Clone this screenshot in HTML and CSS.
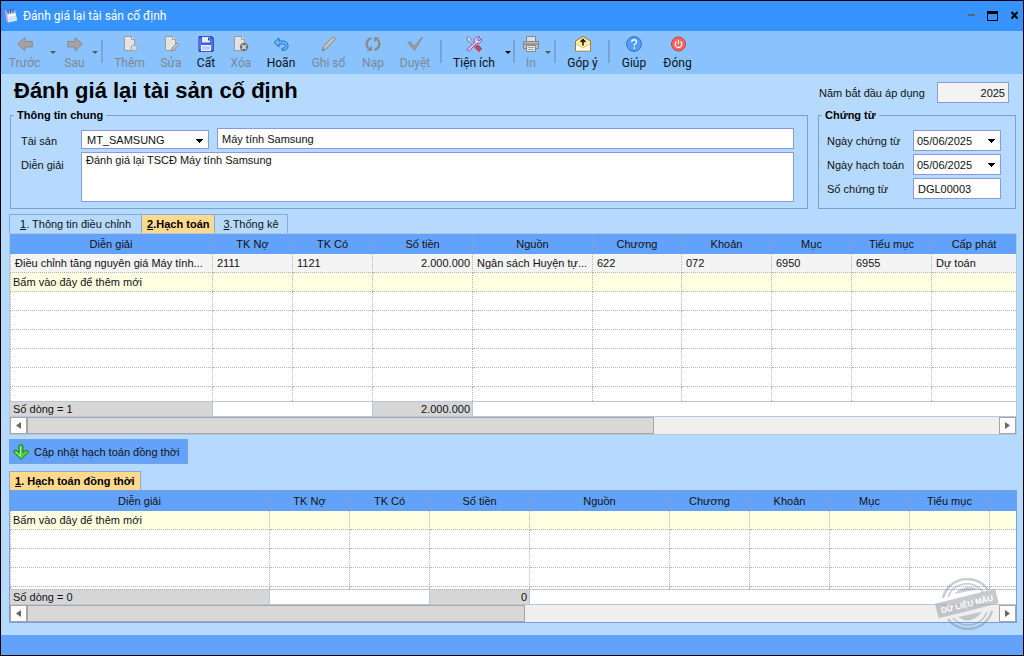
FILE: index.html
```html
<!DOCTYPE html>
<html lang="vi">
<head>
<meta charset="utf-8">
<title>Đánh giá lại tài sản cố định</title>
<link rel="stylesheet" href="styles.css">
</head>
<body>
<div class="window">
  <header class="titlebar">
    <svg class="app-icon" width="14" height="16" viewBox="0 0 14 16"><path d="M.5 3l3-1 1 11-2 1z" fill="#b79be0"/><path d="M3 3.500l8-1.500 2 10.500-9 2z" fill="#fff6dc"/><path d="M3 3.500l8-1.500.6 3-8 1.600z" fill="#7fb2ee"/><path d="M4 9l8-1.500.8 4.500-8.800 2z" fill="#cfe4f7"/><path d="M4 2v3M6.500 1.500v3M9 1v3" stroke="#28456e" stroke-width="1"/></svg>
    <span class="title">Đánh giá lại tài sản cố định</span>
    <div class="window-buttons">
      <button class="wbtn" aria-label="Thu nhỏ"><svg width="12" height="12" viewBox="0 0 12 12"><path d="M3 5h7" stroke="#5c6470" stroke-width="2"/></svg></button>
      <button class="wbtn" aria-label="Phóng to"><svg width="12" height="12" viewBox="0 0 12 12"><path d="M.5 1.500h10v9h-10z" fill="none" stroke="#000"/><path d="M0 1h11v3H0z"/></svg></button>
      <button class="wbtn" aria-label="Đóng cửa sổ"><svg width="12" height="12" viewBox="0 0 12 12"><path d="M2.500 2l6 6.500M8.500 2l-6 6.500" stroke="#000" stroke-width="2"/></svg></button>
    </div>
  </header>

  <nav class="toolbar">
    <button class="tool" disabled><svg width="16" height="16" viewBox="0 0 16 16"><path d="M.7 8L8 1.500v4h7.300v5.500H8v4z" fill="#a3a3a5" stroke="#8a8a8c"/></svg>Trước</button>
    <button class="caret" disabled aria-label="Mở Trước"></button>
    <button class="tool" disabled><svg width="16" height="16" viewBox="0 0 16 16"><path d="M15.300 8L8 1.500v4H.7v5.500H8v4z" fill="#a3a3a5" stroke="#8a8a8c"/></svg>Sau</button>
    <button class="caret" disabled aria-label="Mở Sau"></button>
    <i class="sep"></i>
    <button class="tool" disabled><svg width="16" height="16" viewBox="0 0 16 16"><path d="M2.500.5h7l3 3v11h-10z" fill="#e3e3e4" stroke="#9b9b9d"/><path d="M9.500.5v3h3" fill="#f6f6f6" stroke="#9b9b9d"/><circle cx="12" cy="12" r="3" fill="#d9d9da" stroke="#a6a6a8"/></svg>Thêm</button>
    <button class="tool" disabled><svg width="16" height="16" viewBox="0 0 16 16"><path d="M2.500.5h7l3 3v11h-10z" fill="#e3e3e4" stroke="#9b9b9d"/><path d="M9.500.5v3h3" fill="#f6f6f6" stroke="#9b9b9d"/><path d="M8 15l1-3 5-5 1.700 1.700-5 5z" fill="#c6c6c8" stroke="#8f8f91"/></svg>Sửa</button>
    <button class="tool"><svg width="16" height="16" viewBox="0 0 16 16"><path d="M1 .8h13l1.200 1.200v13.200H1z" fill="#3d5fe8" stroke="#1f2fae"/><path d="M4 1h8v5.500H4z" fill="#dfe9fb"/><path d="M10 1.500h1.500v3H10z" fill="#26348e"/><path d="M3 9h10v6H3z" fill="#f1f5ff"/><path d="M4 11h8M4 13h8" stroke="#8ea5e8"/><path d="M2 2v12M14 3v11" stroke="#7390fa"/></svg>Cất</button>
    <button class="tool" disabled><svg width="16" height="16" viewBox="0 0 16 16"><path d="M1.500.5h7l3 3v11h-10z" fill="#e3e3e4" stroke="#9b9b9d"/><path d="M8.500.5v3h3" fill="#f6f6f6" stroke="#9b9b9d"/><circle cx="11" cy="11" r="4.200" fill="#747476"/><path d="M9 9l4 4M13 9l-4 4" stroke="#dcdcdc" stroke-width="1.500"/></svg>Xóa</button>
    <button class="tool"><svg width="16" height="16" viewBox="0 0 16 16"><path d="M1 6.500L6 2v3h4.500c6 0 6 9.500 0 9.500H9v-2.500h1.500c2.500 0 2.500-4 0-4H6v3z" fill="#69b2ff" stroke="#1b6fd8"/></svg>Hoãn</button>
    <button class="tool" disabled><svg width="16" height="16" viewBox="0 0 16 16"><path d="M1 15l1.500-5L11.500 1.200q2-.8 3.200 1.800L6 12.500z" fill="#b3b3b5" stroke="#929294"/><path d="M4 11L12.500 2.500" stroke="#dcdcde"/><path d="M1 15l.8-2.500 1.700 1.500z" fill="#777"/></svg>Ghi sổ</button>
    <button class="tool" disabled><svg width="16" height="16" viewBox="0 0 16 16"><path d="M6.500 2.200C1 3.500.5 9.500 3.500 12.500M9.500 13.800c5.500-1.300 6-7.300 3-10.300" fill="none" stroke="#8b8b8d" stroke-width="2.400"/><path d="M1.500 14.800H7V9.500zM14.500 1.200H9v5.300z" fill="#8b8b8d"/></svg>Nạp</button>
    <button class="tool" disabled><svg width="16" height="16" viewBox="0 0 16 16"><path d="M.8 6.500l2.500-1 3.700 5L14.500 1.500h1.200L7.500 14.500z" fill="#9b9b9d" stroke="#868688" stroke-width=".7"/></svg>Duyệt</button>
    <i class="sep"></i>
    <button class="tool"><svg width="16" height="16" viewBox="0 0 16 16"><path d="M1 1.500L2.500.5 5 3v1.500l5 5-1.300 1.300-5-5H2.300z" fill="#dde6f4" stroke="#58618f" stroke-width=".8"/><path d="M9 11.500L11.500 9l4 3.500-2.500 3z" fill="#e3404c" stroke="#982236" stroke-width=".8"/><path d="M.8 13.500L8.500 6.500C7.500 2 11-.3 14 1L11.300 3.600l1.500 1.500L15.300 2.600C16 6 13.500 8 10.300 7.500L3 15.200z" fill="#e7c8ee" stroke="#7c4b9b" stroke-width=".9"/></svg>Tiện ích</button>
    <button class="caret" aria-label="Mở Tiện ích"></button>
    <i class="sep"></i>
    <button class="tool" disabled><svg width="16" height="16" viewBox="0 0 16 16"><path d="M3.500.5h9v5h-9z" fill="#dededf" stroke="#858587"/><path d="M.5 5.500h15v7H.5z" fill="#bebec0" stroke="#858587"/><path d="M1 8h14" stroke="#77777a"/><path d="M3.500 9.500h9v6h-9z" fill="#e9e9ea" stroke="#858587"/><path d="M5 11.500h6M5 13.500h6" stroke="#a4a4a6"/></svg>In</button>
    <button class="caret" disabled aria-label="Mở In"></button>
    <i class="sep"></i>
    <button class="tool"><svg width="16" height="16" viewBox="0 0 16 16"><path d="M.5 5L8 .5 15.500 5v10H.5z" fill="#ffeaa0" stroke="#a8752a"/><path d="M1 8l7 4 7-4v6.500H1z" fill="#fffdf2"/><path d="M1 8l7 4 7-4" fill="none" stroke="#e4c878"/><path d="M8 9.500V4M5.500 6L8 3.500 10.500 6" fill="none" stroke="#111" stroke-width="1.500"/></svg>Góp ý</button>
    <i class="sep"></i>
    <button class="tool"><svg width="16" height="16" viewBox="0 0 16 16"><circle cx="8" cy="8" r="7.400" fill="#559cf8" stroke="#2f72cf"/><path d="M5.800 6c0-3 4.700-3 4.700-.2 0 1.900-2.400 1.900-2.400 4" fill="none" stroke="#fff" stroke-width="1.400"/><path d="M7.300 11.300h1.600v1.500H7.300z" fill="#fff"/></svg>Giúp</button>
    <button class="tool"><svg width="16" height="16" viewBox="0 0 16 16"><circle cx="8.500" cy="8" r="7" fill="#f46464" stroke="#c93e45"/><path d="M6.500 5.500a3.300 3.300 0 1 0 4 0M8.500 4v4" fill="none" stroke="#fff" stroke-width="1.200"/></svg>Đóng</button>
  </nav>

  <main class="content">
    <section class="voucher">
      <h1 class="heading">Đánh giá lại tài sản cố định</h1>
      <div class="year-row">
        <label for="year">Năm bắt đầu áp dụng</label>
        <input id="year" class="field year" value="2025" readonly>
      </div>
      <fieldset class="group">
        <legend>Thông tin chung</legend>
        <div class="general-form">
          <label for="asset">Tài sản</label>
          <select id="asset" class="field combo asset"><option>MT_SAMSUNG</option></select>
          <input class="field" aria-label="Tên tài sản" value="Máy tính Samsung">
          <label for="desc" class="top-label">Diễn giải</label>
          <textarea id="desc" class="field desc">Đánh giá lại TSCĐ Máy tính Samsung</textarea>
        </div>
      </fieldset>
      <fieldset class="group">
        <legend>Chứng từ</legend>
        <div class="doc-form">
          <label for="docdate">Ngày chứng từ</label>
          <select id="docdate" class="field combo date"><option>05/06/2025</option></select>
          <label for="postdate">Ngày hạch toán</label>
          <select id="postdate" class="field combo date"><option>05/06/2025</option></select>
          <label for="docno">Số chứng từ</label>
          <input id="docno" class="field" value="DGL00003">
        </div>
      </fieldset>
    </section>

    <div class="tabs main-tabs" role="tablist">
      <button class="tab tab-wide" role="tab"><u>1</u>. Thông tin điều chỉnh</button>
      <button class="tab active" role="tab" aria-selected="true"><u>2</u>.Hạch toán</button>
      <button class="tab" role="tab"><u>3</u>.Thống kê</button>
    </div>
    <div class="grid grid-light">
      <table>
        <colgroup><col class="c203"><col class="c80"><col class="c80"><col class="c100"><col class="c120"><col class="c89"><col class="c90"><col class="c80"><col class="c80"><col></colgroup>
        <thead><tr><th>Diễn giải</th><th>TK Nợ</th><th>TK Có</th><th>Số tiền</th><th>Nguồn</th><th>Chương</th><th>Khoản</th><th>Mục</th><th>Tiểu mục</th><th>Cấp phát</th></tr></thead>
        <tbody>
          <tr class="data"><td>Điều chỉnh tăng nguyên giá Máy tính...</td><td>2111</td><td>1121</td><td class="num">2.000.000</td><td>Ngân sách Huyện tự...</td><td>622</td><td>072</td><td>6950</td><td>6955</td><td>Dự toán</td></tr>
          <tr class="new"><td>Bấm vào đây để thêm mới</td><td></td><td></td><td></td><td></td><td></td><td></td><td></td><td></td><td></td></tr>
          <tr><td></td><td></td><td></td><td></td><td></td><td></td><td></td><td></td><td></td><td></td></tr>
          <tr><td></td><td></td><td></td><td></td><td></td><td></td><td></td><td></td><td></td><td></td></tr>
          <tr><td></td><td></td><td></td><td></td><td></td><td></td><td></td><td></td><td></td><td></td></tr>
          <tr><td></td><td></td><td></td><td></td><td></td><td></td><td></td><td></td><td></td><td></td></tr>
          <tr><td></td><td></td><td></td><td></td><td></td><td></td><td></td><td></td><td></td><td></td></tr>
          <tr class="rest"><td></td><td></td><td></td><td></td><td></td><td></td><td></td><td></td><td></td><td></td></tr>
        </tbody>
        <tfoot><tr><td class="sum">Số dòng = 1</td><td colspan="2"></td><td class="sum num">2.000.000</td><td colspan="6"></td></tr></tfoot>
      </table>
      <div class="scrollbar">
        <button class="arrow" aria-label="Cuộn trái"><svg width="5" height="7" viewBox="0 0 5 7"><path d="M5 0v7L0 3.500z" fill="#666"/></svg></button>
        <div class="track"><div class="thumb" style="width:64.5%"></div></div>
        <button class="arrow" aria-label="Cuộn phải"><svg width="5" height="7" viewBox="0 0 5 7"><path d="M0 0v7l5-3.500z" fill="#666"/></svg></button>
      </div>
    </div>

    <button class="update">
      <svg width="16" height="16" viewBox="0 0 16 16"><path d="M6 1.500Q8-.3 10 1.500V8.500l3-2.300q2.300-.5 2.300 2L8 15.500.7 8.200q0-2.500 2.300-2L6 8.500z" fill="#4fd03c" stroke="#17821a"/><path d="M7.500 2v10.500L3 8" fill="none" stroke="#a8f08a"/></svg>
      Cập nhật hạch toán đồng thời
    </button>

    <div class="tabs sub-tabs" role="tablist">
      <button class="tab active" role="tab" aria-selected="true"><u>1</u>. Hạch toán đồng thời</button>
    </div>
    <div class="grid">
      <table>
        <colgroup><col class="c260"><col class="c80"><col class="c80"><col class="c100"><col class="c140"><col class="c80"><col class="c80"><col class="c80"><col class="c80"><col></colgroup>
        <thead><tr><th>Diễn giải</th><th>TK Nợ</th><th>TK Có</th><th>Số tiền</th><th>Nguồn</th><th>Chương</th><th>Khoản</th><th>Mục</th><th>Tiểu mục</th><th></th></tr></thead>
        <tbody>
          <tr class="new"><td>Bấm vào đây để thêm mới</td><td></td><td></td><td></td><td></td><td></td><td></td><td></td><td></td><td></td></tr>
          <tr><td></td><td></td><td></td><td></td><td></td><td></td><td></td><td></td><td></td><td></td></tr>
          <tr><td></td><td></td><td></td><td></td><td></td><td></td><td></td><td></td><td></td><td></td></tr>
          <tr><td></td><td></td><td></td><td></td><td></td><td></td><td></td><td></td><td></td><td></td></tr>
          <tr class="sliver"><td></td><td></td><td></td><td></td><td></td><td></td><td></td><td></td><td></td><td></td></tr>
        </tbody>
        <tfoot><tr><td class="sum">Số dòng = 0</td><td colspan="2"></td><td class="sum num">0</td><td colspan="6"></td></tr></tfoot>
      </table>
      <div class="scrollbar">
        <button class="arrow" aria-label="Cuộn trái"><svg width="5" height="7" viewBox="0 0 5 7"><path d="M5 0v7L0 3.500z" fill="#666"/></svg></button>
        <div class="track"><div class="thumb" style="width:51.2%"></div></div>
        <button class="arrow" aria-label="Cuộn phải"><svg width="5" height="7" viewBox="0 0 5 7"><path d="M0 0v7l5-3.500z" fill="#666"/></svg></button>
      </div>
      <svg class="stamp" width="66" height="54" viewBox="0 0 66 54">
        <g fill="none" stroke="#7d8793" stroke-opacity=".42">
          <path d="M8 21a25 25 0 0 1 45-8M57 34a25 25 0 0 1-44 8" stroke-width="2.500"/>
          <path d="M13 20a20 20 0 0 1 35-5M52 35a20 20 0 0 1-34 6" stroke-width="1.500"/>
        </g>
        <path d="M19 17q11-11 25-5zM23 40q12 9 24-5z" fill="#7d8793" fill-opacity=".4"/>
        <g transform="rotate(-14 32 27)">
          <path d="M1 19h62v15H1z" fill="#a9acb0" fill-opacity=".65"/>
          <text x="32" y="30" text-anchor="middle" class="stamp-text">DỮ LIỆU MẪU</text>
        </g>
      </svg>
    </div>
  </main>
  <footer class="statusbar"></footer>
</div>
</body>
</html>
```
FILE: styles.css
```css
* { box-sizing: border-box; }

body {
  margin: 0;
  font: 11px/14px "Liberation Sans", Arial, sans-serif;
  color: #111;
}

button, input, select, textarea {
  font: inherit;
  color: inherit;
  margin: 0;
}

button {
  border: 0;
  padding: 0;
  background: none;
}

.window {
  display: flex;
  flex-direction: column;
  min-height: 100vh;
  border: 1px solid #000;
  background: #b5dafe;
}

.titlebar {
  display: flex;
  align-items: center;
  height: 30px;
  padding: 0 2px 0 3px;
  background: #3693ff;
  color: #fff;
}

.title {
  margin-left: 5px;
  font: 12px/16px Roboto, "Noto Sans", sans-serif;
}

.window-buttons {
  display: flex;
  gap: 10px;
  margin-left: auto;
}

.wbtn, .wbtn svg { display: block; }

.toolbar {
  display: grid;
  grid-template-columns: 47px 9px 35px 6px 8px 47px 36px 34px 36px 44px 51px 38px 46px 6px 60px 7px 6px 28px 6px 8px 47px 6px 44px 43px;
  height: 43px;
  background: #89c2fd;
}

.tool {
  display: flex;
  flex-direction: column;
  align-items: center;
  gap: 3px;
  padding-top: 5px;
  white-space: nowrap;
  font: 12px/16px Roboto, "Noto Sans", sans-serif;
  color: #0b1420;
}

.tool:disabled { color: #7d8894; }

.tool svg { flex: none; }

.caret {
  display: flex;
  justify-content: center;
  padding-top: 20px;
  color: #000;
}

.caret:disabled { color: #4f5a66; }

.caret::before {
  content: "";
  border: 3px solid transparent;
  border-top-color: currentColor;
  border-bottom: 0;
}

.sep {
  width: 2px;
  height: 23px;
  margin: 9px auto;
  background: #76a5dd;
}

.content { padding: 0 6px 12px 8px; }

.voucher {
  display: grid;
  grid-template-columns: 1fr 198px;
  column-gap: 10px;
  padding: 0 1px;
}

.heading {
  margin: 0;
  padding: 4px 0 0 4px;
  height: 34px;
  font-size: 22px;
  line-height: 26px;
  color: #000;
}

.year-row {
  display: flex;
  justify-content: space-between;
  align-items: center;
  padding: 7px 7px 0 1px;
  height: 30px;
}

.group {
  min-width: 0;
  margin: 0;
  padding: 0;
  border: 1px solid #7b9fd4;
}

.group legend {
  margin-left: 3px;
  padding: 0 3px;
  font-weight: bold;
  color: #000;
}

.general-form {
  display: grid;
  grid-template-columns: 60px 128px 1fr;
  align-items: end;
  gap: 3px 0;
  padding: 6px 13px 6px 10px;
}

.general-form label { padding-bottom: 1px; }

.general-form input { margin-left: 8px; }

.doc-form {
  display: grid;
  grid-template-columns: 1fr 88px;
  align-items: center;
  gap: 3px 0;
  padding: 8px 14px 8px 8px;
}

.field {
  min-width: 0;
  height: 21px;
  padding: 0 4px;
  border: 1px solid #8a9bdc;
  border-radius: 0;
  background-color: #fff;
  outline: 0;
}

.year {
  width: 72px;
  padding: 0 3px;
  text-align: right;
  background-color: #f3f3f4;
}

.combo {
  appearance: none;
  padding-left: 5px;
  background-image: linear-gradient(#000, #000), linear-gradient(#000, #000), linear-gradient(#000, #000), linear-gradient(#000, #000);
  background-repeat: no-repeat;
  background-size: 7px 1px, 5px 1px, 3px 1px, 1px 1px;
  background-position: right 5px top 8px, right 6px top 9px, right 7px top 10px, right 8px top 11px;
}

.asset { height: 19px; }

.date { padding-left: 3px; }

.top-label {
  align-self: start;
  padding-top: 6px;
}

.desc {
  display: block;
  grid-column: 2 / 4;
  width: 100%;
  height: 50px;
  resize: none;
}

.tabs { display: flex; }

.main-tabs { margin-top: 5px; }

.tab {
  height: 19px;
  padding: 0 8px;
  border: 1px solid #8aa9d8;
  border-left-width: 0;
  border-bottom: 0;
}

.tab:first-child { border-left-width: 1px; }

.tab-wide { padding: 0 10px; }

.tab.active {
  padding: 0 5px;
  background: #ffd98c;
  font-weight: bold;
  color: #000;
}

.grid {
  position: relative;
  border: 1px solid #7b9fd4;
  background: #fff;
}

.grid-light { border-color: #b3c6dc; }

table {
  width: 100%;
  table-layout: fixed;
  border-collapse: separate;
  border-spacing: 0;
}

.c80 { width: 80px; }
.c89 { width: 89px; }
.c90 { width: 90px; }
.c100 { width: 100px; }
.c120 { width: 120px; }
.c140 { width: 140px; }
.c203 { width: 203px; }
.c260 { width: 260px; }

th {
  height: 20px;
  padding: 0;
  border-right: 1px solid #7ba0d2;
  background: #62a2fa;
  font-weight: normal;
}

th:last-child { border-right: 0; }

td {
  height: 19px;
  padding: 0 4px;
  white-space: nowrap;
}

tbody td {
  border-right: 1px dotted #b4b4b4;
  border-bottom: 1px dotted #b4b4b4;
}

tbody td:first-child { border-left: 1px dotted #b4b4b4; }

tbody td:last-child { border-right: 0; }

.data td { background: #f4f4f5; }

.new td {
  padding: 0 2px;
  background: #ffffe1;
}

.num, .data .num {
  padding: 0 2px;
  text-align: right;
}

.rest td {
  height: 14px;
  border-bottom: 0;
}

.sliver td {
  height: 2px;
  border-bottom: 0;
}

tfoot td {
  height: 16px;
  padding: 0 2px 0 3px;
  border: 1px solid #b9c9dd;
  border-left: 0;
}

tfoot td:last-child { border-right: 0; }

.sum { background: #d6d6d6; }

.scrollbar {
  display: flex;
  height: 17px;
  background: #efefef;
}

.arrow {
  display: flex;
  align-items: center;
  justify-content: center;
  width: 17px;
  border: 1px solid #a5a5a5;
  background: #fff;
}

.track { flex: 1; }

.thumb {
  height: 17px;
  border: 1px solid #a5a5a5;
  background: #d8d8d8;
}

.update {
  display: flex;
  align-items: center;
  gap: 5px;
  height: 25px;
  margin-top: 4px;
  padding: 0 8px 0 3px;
  border: 1px solid #7ba0d8;
  background: #62a2fa;
}

.sub-tabs { margin-top: 7px; }

.stamp {
  position: absolute;
  right: 15px;
  bottom: -9px;
}

.stamp-text {
  font: bold 8px "Liberation Sans", Arial, sans-serif;
  fill: #fff;
}

.statusbar {
  height: 20px;
  margin-top: auto;
  background: #62a2fa;
}
```
